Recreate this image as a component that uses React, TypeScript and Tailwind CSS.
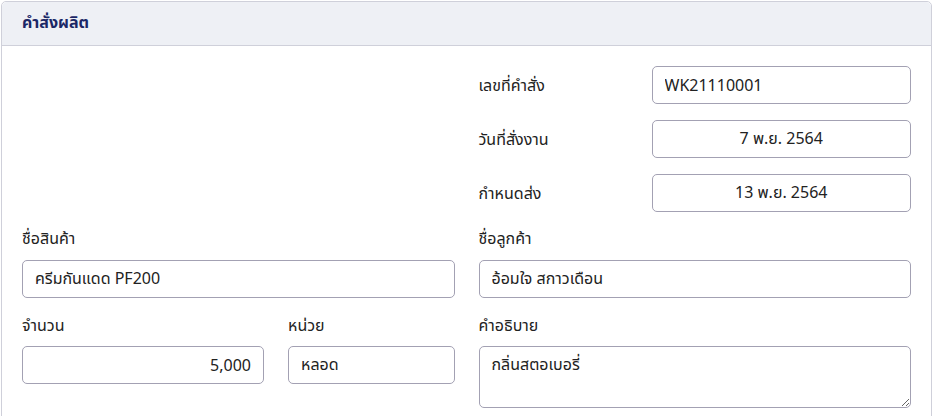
import React from 'react';

const font = { fontFamily: '"Noto Sans", "Noto Sans Thai", "DejaVu Sans", sans-serif' };

const inputCls =
  'w-full h-[38px] rounded-[5px] border border-[#a3a1b3] bg-white px-3 text-[16px] text-[#222] outline-none';

const RightRow: React.FC<{ label: string; value: string; align?: 'left' | 'center' }> = ({ label, value, align = 'left' }) => (
  <div className="flex items-center">
    <label className="w-[173px] shrink-0 text-[16px] text-[#222]">{label}</label>
    <input
      readOnly
      value={value}
      className={`${inputCls} ${align === 'center' ? 'text-center' : 'text-left'}`}
    />
  </div>
);

const App: React.FC = () => {
  return (
    <div className="w-[934px] h-[416px] overflow-hidden bg-white pl-px pt-px" style={font}>
      <div className="w-[931px] h-[430px] rounded-t-[5px] border border-[#cfd0da] bg-white">
        {/* Header */}
        <div className="h-[44px] flex items-center px-5 pb-[3px] bg-[#eef0f5] border-b border-[#cfd0da] rounded-t-[5px]">
          <h2 className="text-[16px] font-bold text-[#1b2766]">คำสั่งผลิต</h2>
        </div>

        {/* Body */}
        <div className="px-5 pt-5 grid grid-cols-2 gap-x-6">
          <div />
          <div className="flex flex-col gap-4">
            <RightRow label="เลขที่คำสั่ง" value="WK21110001" />
            <RightRow label="วันที่สั่งงาน" value="7 พ.ย. 2564" align="center" />
            <RightRow label="กำหนดส่ง" value="13 พ.ย. 2564" align="center" />
          </div>

          <div className="mt-[15px] flex flex-col">
            <label className="h-[33px] text-[16px] text-[#222] leading-[22px]">ชื่อสินค้า</label>
            <input readOnly value="ครีมกันแดด PF200" className={inputCls} />
          </div>
          <div className="mt-[15px] flex flex-col">
            <label className="h-[33px] text-[16px] text-[#222] leading-[22px]">ชื่อลูกค้า</label>
            <input readOnly value="อ้อมใจ สกาวเดือน" className={inputCls} />
          </div>

          <div className="mt-[16px] flex gap-6">
            <div className="w-[242px] flex flex-col">
              <label className="h-[32px] text-[16px] text-[#222] leading-[22px]">จำนวน</label>
              <input readOnly value="5,000" className={`${inputCls} text-right`} />
            </div>
            <div className="flex-1 flex flex-col">
              <label className="h-[32px] text-[16px] text-[#222] leading-[22px]">หน่วย</label>
              <input readOnly value="หลอด" className={inputCls} />
            </div>
          </div>
          <div className="mt-[16px] flex flex-col">
            <label className="h-[32px] text-[16px] text-[#222] leading-[22px]">คำอธิบาย</label>
            <textarea
              readOnly
              value="กลิ่นสตอเบอรี่"
              className="w-full h-[62px] rounded-[5px] border border-[#a3a1b3] bg-white px-3 py-[5px] text-[16px] text-[#222] outline-none resize-y"
            />
          </div>
        </div>
      </div>
    </div>
  );
};

export default App;
